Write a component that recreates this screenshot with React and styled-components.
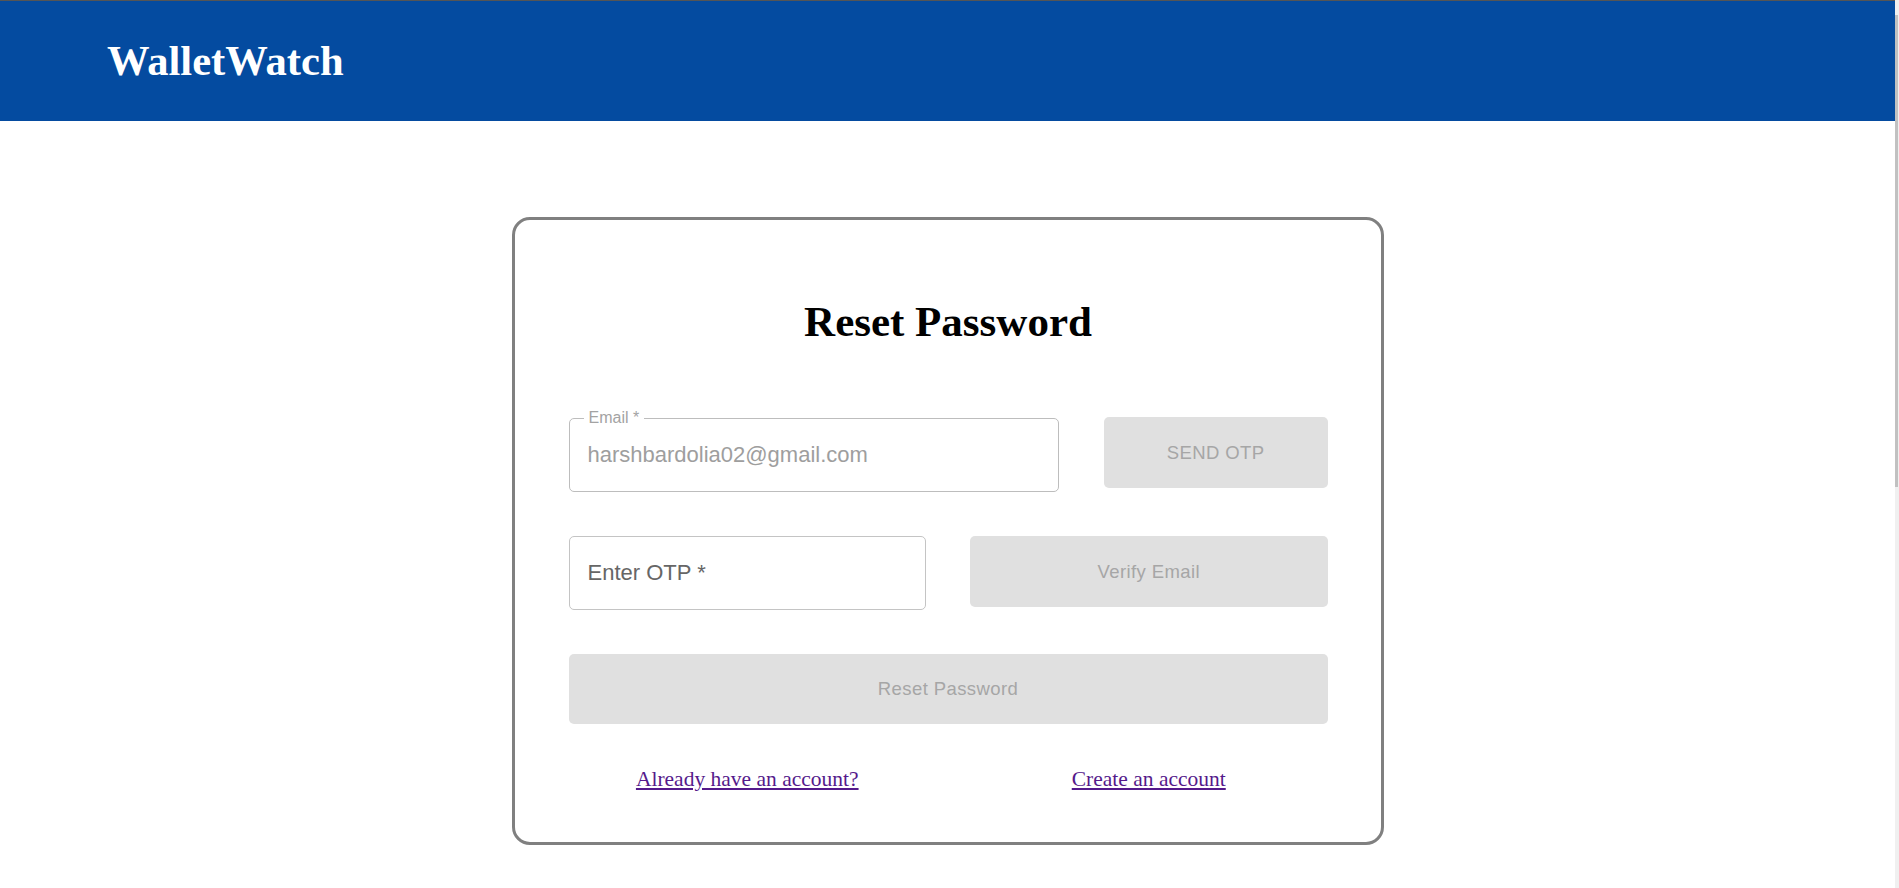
import React from "react";
import styled, { createGlobalStyle } from "styled-components";

const GlobalStyle = createGlobalStyle`
  html {
    margin: 0;
    padding: 0;
    background: #f0f0f0;
  }
  body {
    margin: 0 4px 0 0;
    padding: 0;
    background: #ffffff;
    font-family: "Liberation Serif", "Times New Roman", serif;
  }
`;

const Page = styled.div`
  min-height: 1614px;
  box-sizing: border-box;
  background: #ffffff;
`;

/* stands in for the thin browser scrollbar thumb seen on the right edge */
const ScrollThumb = styled.div`
  position: fixed;
  top: 15px;
  right: 1px;
  width: 3px;
  height: 472px;
  background: #c1c1c1;
`;

const Header = styled.header`
  height: 121px;
  box-sizing: border-box;
  border-top: 1px solid #555555;
  background: #044ba0;
  display: flex;
  align-items: center;
  padding-left: 107px;
`;

const Brand = styled.div`
  font-family: "Liberation Serif", "Times New Roman", serif;
  font-weight: 700;
  font-size: 42.6px;
  line-height: 48px;
  color: #ffffff;
`;

const Card = styled.div`
  width: 872px;
  box-sizing: border-box;
  margin: 96px auto 0;
  border: 3px solid #808080;
  border-radius: 18px;
  padding: 78px 53px 50px 54px;
  display: flex;
  flex-direction: column;
`;

const Heading = styled.h2`
  margin: 0 0 71px;
  text-align: center;
  font-family: "Liberation Serif", "Times New Roman", serif;
  font-weight: 700;
  font-size: 43px;
  line-height: 48px;
  color: #000000;
`;

const Form = styled.div`
  display: flex;
  flex-direction: column;
  gap: 44px;
`;

const Row = styled.div`
  display: grid;
  grid-template-columns: ${(p) => p.cols};
  column-gap: ${(p) => p.gap || 44}px;
  align-items: start;
`;

const FieldBox = styled.div`
  position: relative;
  height: 74px;
  box-sizing: border-box;
  margin-top: ${(p) => p.offset || 0}px;
  border: 1px solid ${(p) => (p.disabled ? "#bdbdbd" : "#c4c4c4")};
  border-radius: 5px;
  background: #ffffff;
`;

const FloatLabel = styled.span`
  position: absolute;
  top: -9px;
  left: 14px;
  padding: 0 5px;
  background: #ffffff;
  font-family: "Liberation Sans", Arial, sans-serif;
  font-size: 16px;
  line-height: 16px;
  color: #a3a3a3;
`;

const Input = styled.input`
  width: 100%;
  height: 100%;
  box-sizing: border-box;
  border: none;
  outline: none;
  background: transparent;
  padding: 0 18px;
  font-family: "Liberation Sans", Arial, sans-serif;
  font-size: 22px;
  color: ${(p) => (p.disabled ? "#9e9e9e" : "#222222")};

  &::placeholder {
    color: #666666;
    opacity: 1;
  }

  &:disabled {
    -webkit-text-fill-color: #9e9e9e;
  }
`;

const Button = styled.button`
  height: ${(p) => p.h || 71}px;
  border: none;
  border-radius: 5px;
  background: #e0e0e0;
  color: #a6a6a6;
  font-family: "Liberation Sans", Arial, sans-serif;
  font-size: 18.5px;
  letter-spacing: 0.4px;
  text-transform: ${(p) => (p.upper ? "uppercase" : "none")};
  cursor: default;
`;

const Links = styled.div`
  display: grid;
  grid-template-columns: 1fr 1fr;
  column-gap: 44px;
  margin-top: 43px;
`;

const Link = styled.a`
  justify-self: center;
  font-family: "Liberation Serif", "Times New Roman", serif;
  font-size: 21.5px;
  line-height: 25px;
  color: #551a8b;
  text-decoration: underline;
  cursor: pointer;
`;

const App = () => {
  return (
    <Page>
      <GlobalStyle />
      <ScrollThumb />
      <Header>
        <Brand>WalletWatch</Brand>
      </Header>

      <Card>
        <Heading>Reset Password</Heading>
        <Form>
          <Row cols="489fr 223fr" gap={45}>
            <FieldBox disabled offset={1}>
              <FloatLabel>Email *</FloatLabel>
              <Input disabled value="harshbardolia02@gmail.com" readOnly />
            </FieldBox>
            <Button upper disabled>
              Send OTP
            </Button>
          </Row>

          <Row cols="1fr 1fr">
            <FieldBox>
              <Input placeholder="Enter OTP *" />
            </FieldBox>
            <Button disabled>Verify Email</Button>
          </Row>

          <Row cols="1fr">
            <Button disabled h={70}>
              Reset Password
            </Button>
          </Row>
        </Form>

        <Links>
          <Link href="#">Already have an account?</Link>
          <Link href="#">Create an account</Link>
        </Links>
      </Card>
    </Page>
  );
};

export default App;
